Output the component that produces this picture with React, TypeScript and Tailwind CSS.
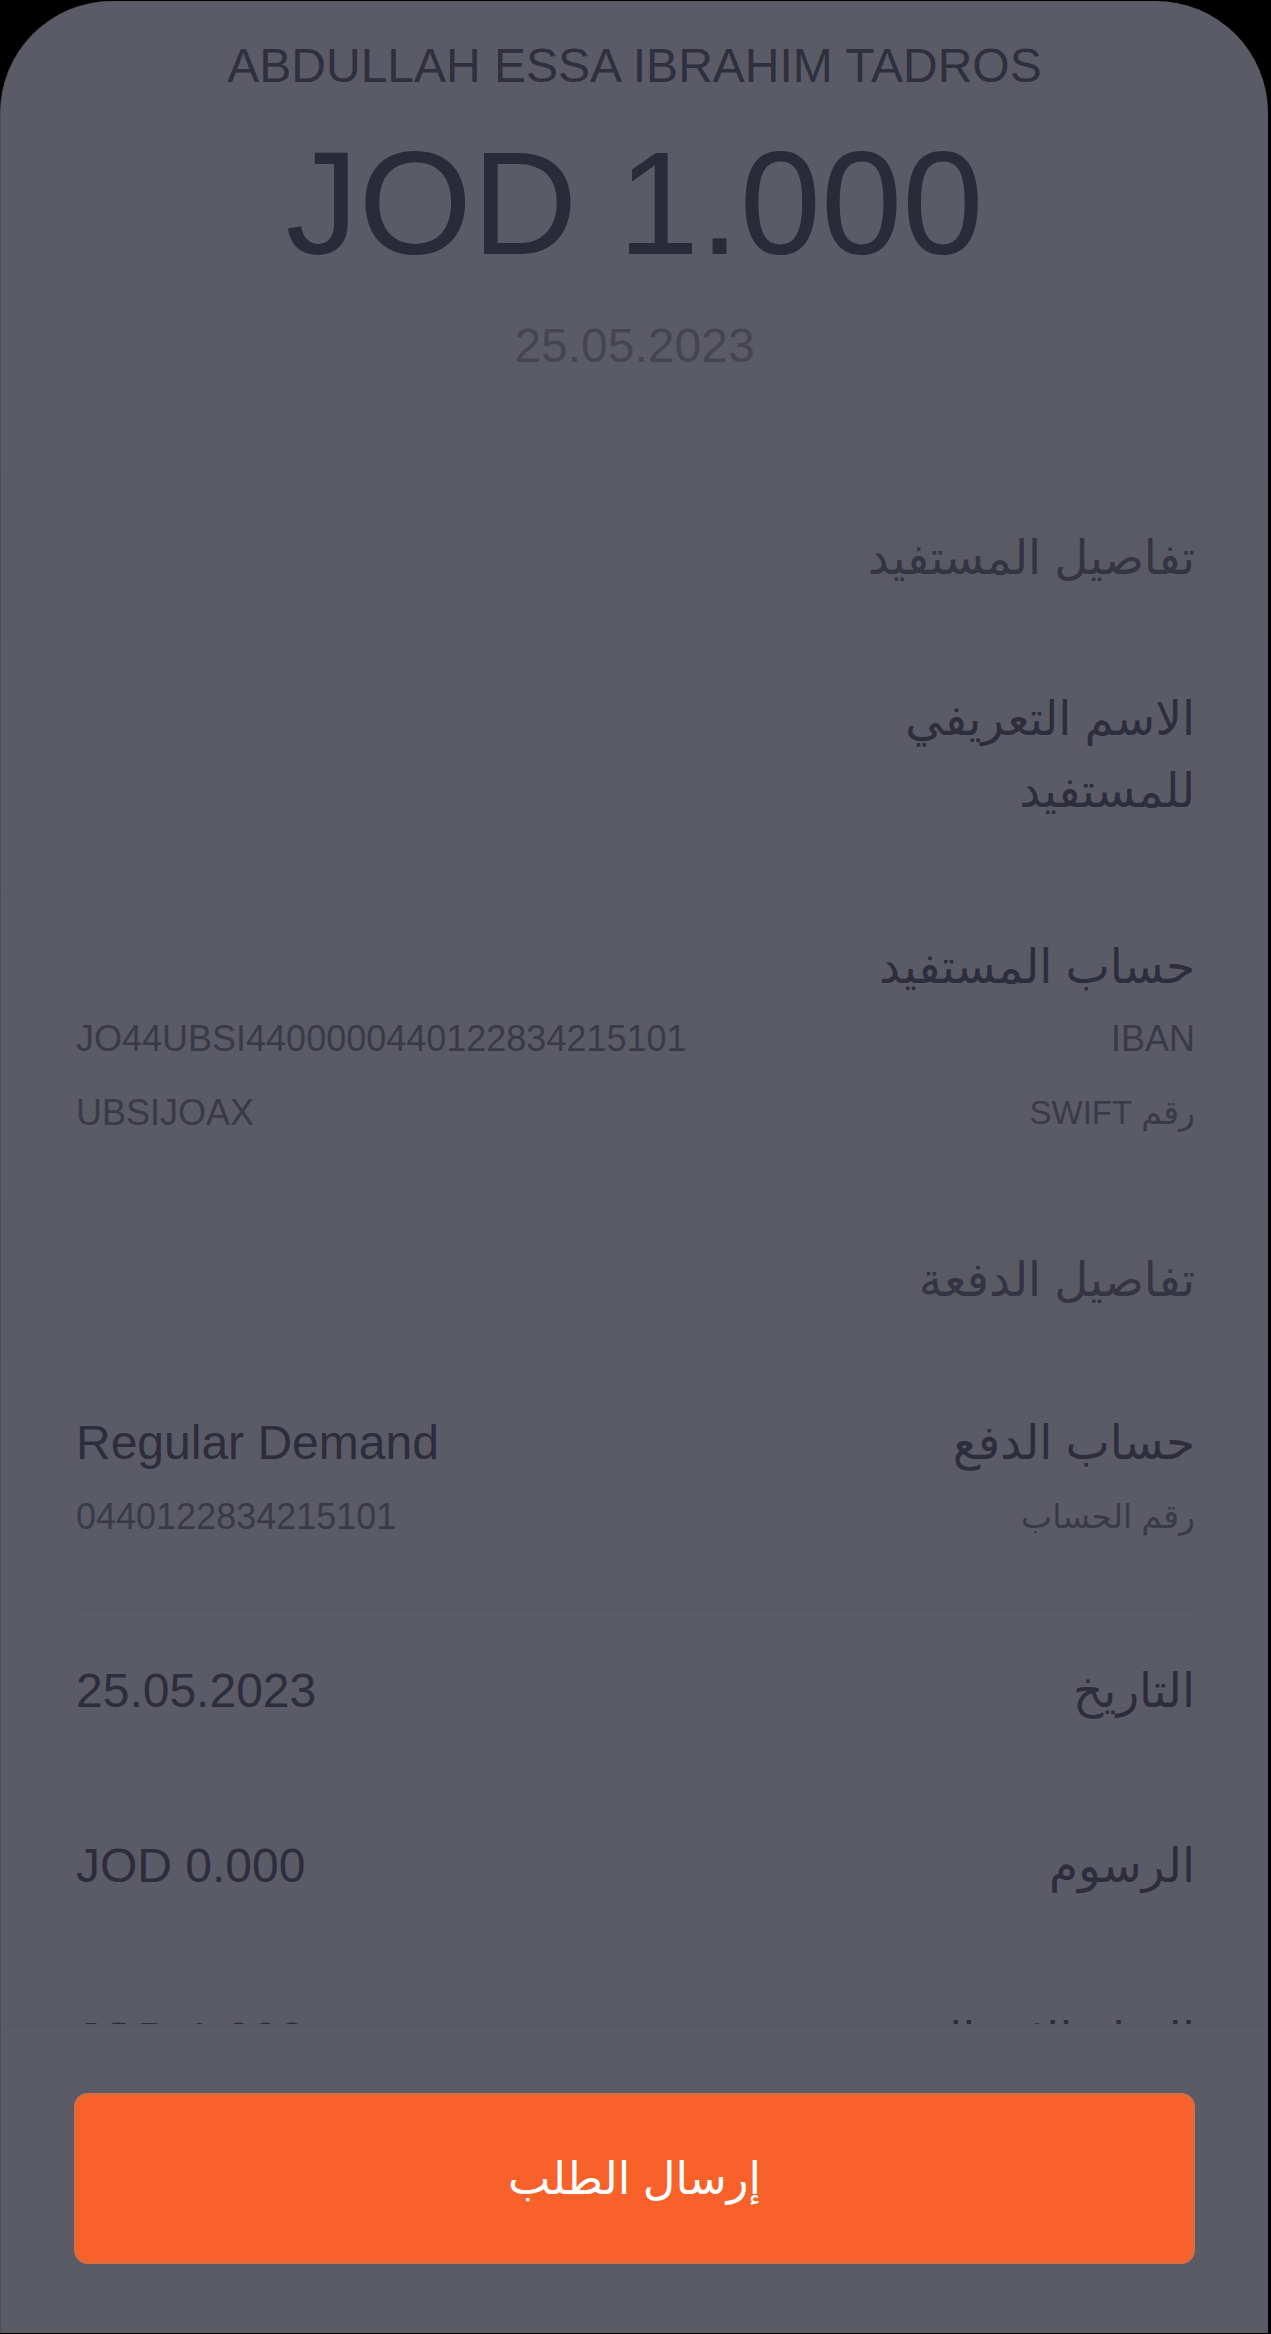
import React from "react";

const latin = "font-['Liberation_Sans','DejaVu_Sans',sans-serif]";

function Divider() {
  return <div className="mx-[75px] h-px bg-[#575763]" />;
}

function Band({ children, h }: { children: React.ReactNode; h: string }) {
  return (
    <div className={`flex items-center justify-end border-y border-[#585864] bg-[#5a5a65] pr-[73px] ${h}`}>
      <div dir="rtl" className="pt-[4px] text-[47px] leading-[56px] text-[#343442]">
        {children}
      </div>
    </div>
  );
}

function SimpleRow({ value, label, h, pt }: { value: string; label: string; h: string; pt: string }) {
  return (
    <div className={`flex items-start justify-between pl-[75px] pr-[73px] ${h} ${pt}`}>
      <div className="text-[48px] leading-[56px] text-[#2d2d3b]">{value}</div>
      <div dir="rtl" className="text-[47px] leading-[56px] text-[#2d2d3b]">
        {label}
      </div>
    </div>
  );
}

export default function App() {
  return (
    <div className={`min-h-[2334px] w-[1271px] bg-black pt-px ${latin}`}>
      <div className="flex h-[2332px] w-[1268px] flex-col overflow-hidden rounded-t-[112px] border-l border-[#4f4f5a] bg-[#5b5b67]">
        <div className="relative flex-1 overflow-hidden">
          {/* Header */}
          <div className="flex h-[476px] flex-col items-center pt-[37px]">
            <div className="text-[48px] leading-[56px] text-[#2f2f3d]">ABDULLAH ESSA IBRAHIM TADROS</div>
            <div className="mt-[30px] text-[146px] leading-[160px] text-[#2a2a39]">JOD 1.000</div>
            <div className="mt-[34px] text-[48px] leading-[56px] text-[#45454f]">25.05.2023</div>
          </div>

          <Band h="h-[157px]">تفاصيل المستفيد</Band>

          {/* Nickname row */}
          <div className="flex h-[254px] items-center justify-end pb-[12px] pr-[73px]">
            <div dir="rtl" className="text-right text-[47px] leading-[72px] text-[#2d2d3b]">
              الاسم التعريفي
              <br />
              للمستفيد
            </div>
          </div>
          <div className="h-px bg-[#595964]" />

          {/* Beneficiary account */}
          <div className="flex h-[314px] flex-col pl-[75px] pr-[73px] pt-[50px]">
            <div dir="rtl" className="text-[47px] leading-[56px] text-[#2d2d3b]">حساب المستفيد</div>
            <div className="mt-[23px] flex items-start justify-between text-[36px] leading-[42px] text-[#3a3a47]">
              <span>JO44UBSI4400000440122834215101</span>
              <span>IBAN</span>
            </div>
            <div className="mt-[32px] flex items-start justify-between text-[36px] leading-[42px] text-[#3a3a47]">
              <span>UBSIJOAX</span>
              <span dir="rtl" className="text-[33px]">
                رقم SWIFT
              </span>
            </div>
          </div>

          <Band h="h-[150px]">تفاصيل الدفعة</Band>

          {/* Payment account */}
          <div className="flex h-[255px] flex-col pl-[75px] pr-[73px] pt-[62px]">
            <div className="flex items-start justify-between">
              <div className="text-[48px] leading-[56px] text-[#2d2d3b]">Regular Demand</div>
              <div dir="rtl" className="text-[47px] leading-[56px] text-[#2d2d3b]">حساب الدفع</div>
            </div>
            <div className="mt-[25px] flex items-start justify-between text-[36px] leading-[42px] text-[#3a3a47]">
              <span>0440122834215101</span>
              <span dir="rtl" className="text-[33px]">رقم الحساب</span>
            </div>
          </div>
          <Divider />
          <SimpleRow value="25.05.2023" label="التاريخ" h="h-[172px]" pt="pt-[54px]" />
          <Divider />
          <SimpleRow value="JOD 0.000" label="الرسوم" h="h-[176px]" pt="pt-[56px]" />
          <Divider />
          <SimpleRow value="JOD 1.000" label="المبلغ الإجمالي" h="h-[176px]" pt="pt-[53px]" />
        </div>

        {/* Bottom bar */}
        <div className="flex h-[309px] shrink-0 items-start border-t border-[#575763] bg-[#5b5b67] px-[73px] pt-[68px]">
          <button className="flex h-[171px] w-full items-center justify-center rounded-[14px] border-[3px] border-[#df6c3d] bg-[#f8622a] text-[45px] text-white">
            <span dir="rtl">إرسال الطلب</span>
          </button>
        </div>
      </div>
    </div>
  );
}
